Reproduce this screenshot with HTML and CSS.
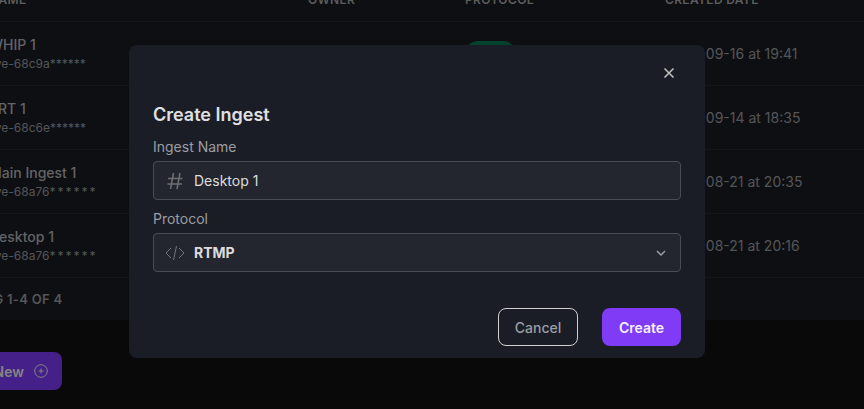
FILE: index.html
```html
<!DOCTYPE html>
<html lang="en">
<head>
    <meta charset="UTF-8">
    <meta name="viewport" content="width=device-width, initial-scale=1.0">
    <title>Ingests</title>
    <link rel="stylesheet" href="styles.css">
</head>
<body>
    <div class="page">
        <div class="table-card">
            <div class="table-row table-head">
                <div>NAME</div>
                <div>OWNER</div>
                <div>PROTOCOL</div>
                <div>CREATED DATE</div>
            </div>
            <div class="table-row">
                <div><div class="row-name">WHIP 1</div><div class="row-key">live-68c9a******</div></div>
                <div></div>
                <div><span class="pill">WHIP</span></div>
                <div class="row-date">2025-09-16 at 19:41</div>
            </div>
            <div class="table-row">
                <div><div class="row-name">SRT 1</div><div class="row-key">live-68c6e******</div></div>
                <div></div>
                <div></div>
                <div class="row-date">2025-09-14 at 18:35</div>
            </div>
            <div class="table-row">
                <div><div class="row-name">Main Ingest 1</div><div class="row-key">live-68a76<span class="wide-stars">******</span></div></div>
                <div></div>
                <div></div>
                <div class="row-date">2025-08-21 at 20:35</div>
            </div>
            <div class="table-row">
                <div><div class="row-name">Desktop 1</div><div class="row-key">live-68a76<span class="wide-stars">******</span></div></div>
                <div></div>
                <div></div>
                <div class="row-date">2025-08-21 at 20:16</div>
            </div>
            <div class="table-foot">SHOWING 1-4 OF 4</div>
        </div>
        <button class="new-button">
            Create New
            <svg width="16" height="16" viewBox="0 0 16 16" fill="none" stroke="currentColor" stroke-width="1">
                <circle cx="8" cy="8" r="6.3"/>
                <path d="M8 5.500v5M5.500 8h5"/>
            </svg>
        </button>
    </div>

    <div class="overlay">
        <div class="modal">
            <button class="close-button" aria-label="Close">
                <svg width="12" height="12" viewBox="0 0 12 12" fill="none" stroke="currentColor" stroke-width="1.5">
                    <path d="M1.500 1.500l9 9M10.500 1.500l-9 9"/>
                </svg>
            </button>
            <h2 class="modal-title">Create Ingest</h2>
            <div class="field-label">Ingest Name</div>
            <div class="field">
                <svg class="icon-hash" width="16" height="18" viewBox="0 0 16 18" fill="none" stroke="currentColor" stroke-width="1.500">
                    <path d="M6.500 1L3.500 17M13 1L10 17M1 6.500h14.500M.5 12h14.500"/>
                </svg>
                <span class="field-text">Desktop 1</span>
            </div>
            <div class="field-label">Protocol</div>
            <div class="field">
                <svg class="icon-code" width="20" height="16" viewBox="0 0 20 16" fill="none" stroke="currentColor" stroke-width="1">
                    <path d="M6 3L1 8l5 5M14 3l5 5-5 5M11.500 1L8.500 15"/>
                </svg>
                <span class="field-text field-strong">RTMP</span>
                <svg class="chevron" width="10" height="6" viewBox="0 0 10 6" fill="none" stroke="currentColor" stroke-width="1.500">
                    <path d="M1 1l4 4 4-4"/>
                </svg>
            </div>
            <div class="modal-actions">
                <button class="btn btn-cancel">Cancel</button>
                <button class="btn btn-create">Create</button>
            </div>
        </div>
    </div>
</body>
</html>
```

FILE: styles.css
```css
* {
    margin: 0;
    padding: 0;
    box-sizing: border-box;
}

html, body {
    height: 100%;
    overflow: hidden;
}

body {
    font-family: Inter, 'Liberation Sans', sans-serif;
    background: #0f0f12;
}

.page {
    margin: -43px 0 0 -11px;
}

.table-card {
    background: #17191f;
    color: #a6a6aa;
}

.table-row {
    display: grid;
    grid-template-columns: 319px 157px 200px 1fr;
    align-items: center;
    height: 64px;
    border-top: 1px solid #23252b;
}

.table-head {
    align-items: end;
    padding-bottom: 14px;
    border-top: none;
    font-size: 12px;
    font-weight: 600;
    letter-spacing: 0.35px;
    color: #999;
}

.row-name {
    font-size: 14px;
    font-weight: 500;
    line-height: 20px;
}

.row-key {
    font-size: 12px;
    line-height: 18px;
    color: #8e8e92;
}

.wide-stars {
    letter-spacing: 2px;
}

.row-date {
    font-size: 14px;
    color: #8e8e92;
}

.pill {
    display: inline-block;
    width: 51px;
    height: 26px;
    border-radius: 13px;
    background: #056e4e;
    font-size: 12px;
    line-height: 26px;
    text-align: center;
}

.table-foot {
    height: 43px;
    line-height: 42px;
    border-top: 1px solid #23252b;
    text-indent: -52px;
    font-size: 13px;
    font-weight: 600;
    letter-spacing: 0.3px;
    color: #8e8e92;
}

.new-button {
    display: flex;
    align-items: center;
    justify-content: flex-end;
    gap: 9px;
    width: 73px;
    height: 38px;
    margin-top: 32px;
    padding-right: 13px;
    white-space: nowrap;
    border: none;
    border-radius: 8px;
    background: #7336e5;
    color: #ddd;
    font-family: inherit;
    font-size: 14px;
    font-weight: 600;
}

.new-button svg {
    flex: none;
}

.overlay {
    position: fixed;
    inset: 0;
    background: rgba(0, 0, 0, 0.4);
}

.modal {
    position: relative;
    width: 576px;
    height: 313px;
    margin: 45px 0 0 129px;
    padding: 58px 24px 12px;
    background: #1a1d25;
    border-radius: 8px;
}

.close-button {
    position: absolute;
    top: 22px;
    right: 30px;
    width: 12px;
    height: 12px;
    display: flex;
    background: none;
    border: none;
    color: #c4c4c4;
}

.modal-title {
    margin-bottom: 10px;
    font-size: 18px;
    font-weight: 600;
    line-height: 24px;
    color: #e0e0e2;
}

.field-label {
    font-size: 14px;
    line-height: 20px;
    color: #9b9da3;
}

.field {
    display: flex;
    align-items: center;
    height: 39px;
    margin-top: 4px;
    margin-bottom: 9px;
    padding-right: 16px;
    background: #23262e;
    border: 1px solid #4a4c52;
    border-radius: 4px;
    color: #dcdcdf;
}

.icon-hash {
    flex: none;
    margin: 1px 11px 0 13px;
    color: #6e7076;
}

.icon-code {
    flex: none;
    margin: 0 9px 0 11px;
    color: #72747a;
}

.field-text {
    font-size: 14px;
}

.field-strong {
    font-weight: 700;
}

.chevron {
    margin-left: auto;
    margin-right: -2px;
    color: #9b9da3;
}

.modal-actions {
    display: flex;
    justify-content: flex-end;
    gap: 24px;
    margin-top: 36px;
}

.btn {
    height: 38px;
    border-radius: 8px;
    font-family: inherit;
    font-size: 14px;
}

.btn-cancel {
    width: 80px;
    background: none;
    border: 1px solid #d0d0d0;
    color: #9b9da3;
    font-weight: 500;
}

.btn-create {
    width: 79px;
    background: #7f3bf5;
    border: none;
    color: #f4f0ff;
    font-weight: 600;
}
```
